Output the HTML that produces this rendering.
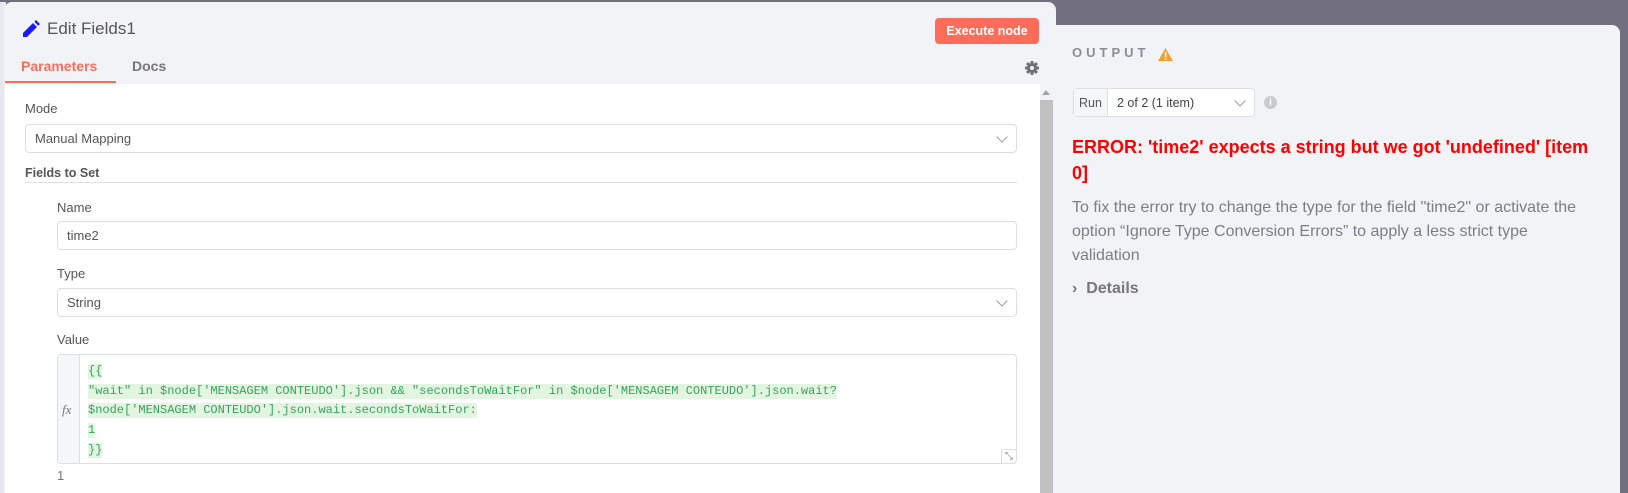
<!DOCTYPE html>
<html><head><meta charset="utf-8"><style>
*{box-sizing:border-box;margin:0;padding:0}
body{width:1628px;height:493px;overflow:hidden;background:#72707f;font-family:"Liberation Sans",sans-serif;position:relative}
.abs{position:absolute}
.left{left:4px;top:2px;width:1052px;height:491px;background:#f2f3f7;border-radius:8px 8px 0 0}
.white{left:5px;top:84px;width:1035px;height:409px;background:#fff}
.lbl{font-size:13px;color:#555}
.inp{border:1px solid #dcdfe6;border-radius:4px;background:#fff;font-size:13px;color:#555;padding-left:9px;display:flex;align-items:center}
.chev{position:absolute;right:10px;top:50%;width:8px;height:8px;border-right:1px solid #999;border-bottom:1px solid #999;transform:translateY(-75%) rotate(45deg)}
.code{font-family:"Liberation Mono",monospace;font-size:12px;color:#3aa160;}
.code span{background:#e2f5e1;display:inline-block;line-height:15px}
</style></head><body>
<div class="abs" style="left:0;top:2px;width:6px;height:491px;background:#e8e8ee"></div>
<div class="abs left"></div>
<svg class="abs" style="left:21px;top:20px" width="19" height="19" viewBox="0 0 19 19"><path d="M2 13 L12 3 L16 7 L6 17 L2 17 Z" fill="#1a1aff"/><path d="M13.3 1.7 L15 0 L19 4 L17.3 5.7 Z" fill="#1a1aff"/></svg>
<div class="abs" style="left:47px;top:19px;font-size:17px;color:#555">Edit Fields1</div>
<div class="abs" style="left:935px;top:18px;width:104px;height:26px;background:#ff6d5a;border-radius:4px;color:#fff;font-size:12.5px;font-weight:bold;display:flex;align-items:center;justify-content:center">Execute node</div>
<div class="abs" style="left:21px;top:58px;font-size:14px;font-weight:bold;color:#ff6d5a">Parameters</div>
<div class="abs" style="left:132px;top:58px;font-size:14px;font-weight:bold;color:#777">Docs</div>
<div class="abs" style="left:5px;top:81px;width:111px;height:2px;background:#ff6d5a"></div>
<svg class="abs" style="left:1025px;top:61px" width="14" height="14" viewBox="0 0 14 14"><g fill="#6f6f78"><circle cx="7" cy="7" r="5"/><rect x="5.5" y="0" width="3" height="14" rx="0.5"/><rect x="0" y="5.5" width="14" height="3" rx="0.5"/><rect x="5.5" y="0" width="3" height="14" rx="0.5" transform="rotate(45 7 7)"/><rect x="5.5" y="0" width="3" height="14" rx="0.5" transform="rotate(-45 7 7)"/></g><circle cx="7" cy="7" r="2" fill="#f2f3f7"/></svg>
<div class="abs white"></div>
<div class="abs" style="left:1040px;top:100px;width:13px;height:393px;background:#c1c1c1"></div>
<div class="abs" style="left:1042px;top:90px;width:0;height:0;border-left:4px solid transparent;border-right:4px solid transparent;border-bottom:5px solid #a3a3a3"></div>
<div class="abs lbl" style="left:25px;top:101px">Mode</div>
<div class="abs inp" style="left:25px;top:124px;width:992px;height:29px">Manual Mapping<i class="chev"></i></div>
<div class="abs lbl" style="left:25px;top:166px;font-weight:bold;color:#555;font-size:12.5px">Fields to Set</div>
<div class="abs" style="left:25px;top:182px;width:992px;height:1px;background:#dcdfe6"></div>
<div class="abs lbl" style="left:57px;top:200px">Name</div>
<div class="abs inp" style="left:57px;top:221px;width:960px;height:29px">time2</div>
<div class="abs lbl" style="left:57px;top:266px">Type</div>
<div class="abs inp" style="left:57px;top:288px;width:960px;height:29px">String<i class="chev"></i></div>
<div class="abs lbl" style="left:57px;top:332px">Value</div>
<div class="abs" style="left:57px;top:354px;width:960px;height:110px;border:1px solid #dcdfe6;border-radius:4px;background:#fff"></div>
<div class="abs" style="left:58px;top:355px;width:22px;height:108px;background:#f5f6f8;border-right:1px solid #dcdfe6;border-radius:4px 0 0 4px"></div>
<div class="abs" style="left:62px;top:402px;font-family:'Liberation Serif',serif;font-style:italic;font-size:13px;color:#777">fx</div>
<div class="abs code" style="left:88px;top:362px;line-height:19.7px">
<span>{{</span><br><span>"wait" in $node['MENSAGEM CONTEUDO'].json &amp;&amp; "secondsToWaitFor" in $node['MENSAGEM CONTEUDO'].json.wait?</span><br><span>$node['MENSAGEM CONTEUDO'].json.wait.secondsToWaitFor:</span><br><span>1</span><br><span>}}</span></div>
<div class="abs" style="left:1001px;top:449px;width:16px;height:15px;border:1px solid #dcdfe6;border-radius:3px 0 4px 0;font-size:10px;color:#777;text-align:center;line-height:13px">⤡</div>
<div class="abs lbl" style="left:57px;top:468px;color:#777">1</div>
<div class="abs" style="left:1055px;top:25px;width:565px;height:468px;background:#f2f3f7;border-radius:0 8px 0 0"></div>
<div class="abs" style="left:1072px;top:45px;font-size:13px;font-weight:bold;letter-spacing:4px;color:#8a8d99">OUTPUT</div>
<svg class="abs" style="left:1158px;top:48px" width="15" height="13" viewBox="0 0 15 13"><path d="M7.5 0 L15 13 L0 13 Z" fill="#f0a030"/><rect x="6.8" y="4" width="1.6" height="5" fill="#fff"/><rect x="6.8" y="10" width="1.6" height="1.6" fill="#fff"/></svg>
<div class="abs inp" style="left:1073px;top:88px;width:182px;height:29px;padding:0"><div style="width:34px;height:100%;background:#f5f6f8;border-right:1px solid #dcdfe6;display:flex;align-items:center;justify-content:center;font-size:12.5px">Run</div><div style="padding-left:9px;font-size:12.5px;color:#444">2 of 2 (1 item)</div><i class="chev"></i></div>
<div class="abs" style="left:1264px;top:96px;width:13px;height:13px;border-radius:50%;background:#c8cad0;color:#fff;font-size:10px;font-weight:bold;text-align:center;line-height:13px">i</div>
<div class="abs" style="left:1072px;top:134px;width:530px;font-size:18px;font-weight:bold;color:#ff0000;line-height:26px">ERROR: 'time2' expects a string but we got 'undefined' [item 0]</div>
<div class="abs" style="left:1072px;top:196px;width:515px;font-size:16px;color:#7d7d87;line-height:24px">To fix the error try to change the type for the field "time2" or activate the option “Ignore Type Conversion Errors” to apply a less strict type validation</div>
<div class="abs" style="left:1072px;top:280px;font-size:16px;font-weight:bold;color:#777">›&nbsp; Details</div>
</body></html>
